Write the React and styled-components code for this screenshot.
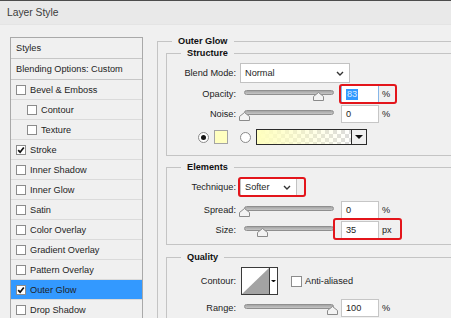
import React from 'react';
import styled, { createGlobalStyle, css } from 'styled-components';

// left list of effects
const styleItems = [
  { label: 'Styles', header: true },
  { label: 'Blending Options: Custom', header: true },
  { label: 'Bevel & Emboss', box: true },
  { label: 'Contour', box: true, sub: true },
  { label: 'Texture', box: true, sub: true },
  { label: 'Stroke', box: true, checked: true },
  { label: 'Inner Shadow', box: true },
  { label: 'Inner Glow', box: true },
  { label: 'Satin', box: true },
  { label: 'Color Overlay', box: true },
  { label: 'Gradient Overlay', box: true },
  { label: 'Pattern Overlay', box: true },
  { label: 'Outer Glow', box: true, checked: true, active: true },
  { label: 'Drop Shadow', box: true },
];

const GlobalStyle = createGlobalStyle`
  html, body {
    margin: 0;
    padding: 0;
    background: #f0f0f0;
  }
  body {
    font-family: "Liberation Sans", Arial, sans-serif;
    font-size: 9.2px;
    color: #1e1e1e;
  }
`;

const Window = styled.div`
  width: 451px;
  height: 318px;
  overflow: hidden;
  display: flex;
  flex-direction: column;
  background: #f0f0f0;
`;

const TitleBar = styled.div`
  height: 23px;
  flex-shrink: 0;
  border-top: 1px solid #4d4d4d;
  border-bottom: 1px solid #e4e4e4;
  background: #e9e9e9;
  display: flex;
  align-items: center;
  padding-left: 7px;
  font-size: 10.3px;
  color: #3c3c3c;
`;

const Body = styled.div`
  display: flex;
  align-items: flex-start;
  gap: 14px;
  padding: 10px 0 0 10px;
`;

const StyleList = styled.div`
  margin-top: 2px;
  width: 133px;
  flex-shrink: 0;
  box-sizing: border-box;
  border: 1px solid #a9a9a9;
`;

const StyleRow = styled.div`
  height: ${p => (p.$header ? 21 : 20)}px;
  box-sizing: border-box;
  display: flex;
  align-items: center;
  gap: 4px;
  padding-left: ${p => (p.$sub ? 16 : 5)}px;
  border-bottom: 1px solid ${p => (p.$header ? '#c6c6c6' : '#dadada')};
  background: ${p => (p.$active ? '#3399ff' : 'transparent')};
  white-space: nowrap;
`;

const Box = styled.span`
  width: ${p => p.$size || 10}px;
  height: ${p => p.$size || 10}px;
  box-sizing: border-box;
  margin-left: ${p => p.$ml || 0}px;
  border: 1px solid #8c8c8c;
  background: #fff;
  display: inline-flex;
  align-items: center;
  justify-content: center;
  flex-shrink: 0;
`;

const Column = styled.div`
  flex-shrink: 0;
`;

const Group = styled.fieldset`
  margin: ${p => p.$mt || 0}px 0 0 0;
  padding: ${p => p.$pt || 0}px 0 ${p => p.$pb || 0}px 8px;
  border: 1px solid #c4c4c4;
  width: ${p => p.$w}px;
  box-sizing: border-box;
  min-width: 0;
`;

const Legend = styled.legend`
  margin-left: 6px;
  padding: 0 6px;
  height: 12px;
  line-height: 12px;
  font-weight: bold;
  color: #111;
`;

const Row = styled.div`
  height: ${p => p.$h || 20}px;
  margin-top: ${p => p.$mt || 0}px;
  display: flex;
  align-items: center;
  padding-left: ${p => p.$pl || 0}px;
`;

const Label = styled.span`
  width: 61px;
  text-align: right;
  flex-shrink: 0;
  color: #222;
`;

const Select = styled.div`
  width: ${p => p.$w}px;
  height: 20px;
  box-sizing: border-box;
  margin-left: ${p => p.$ml ?? 4}px;
  border: 1px solid #c2c2c2;
  background: #fff;
  display: flex;
  align-items: center;
  justify-content: space-between;
  padding: 0 5px 0 4px;
`;

const SliderBox = styled.div`
  position: relative;
  width: 90px;
  height: 12px;
  margin-left: 8px;
  flex-shrink: 0;
`;

const Track = styled.div`
  margin-top: 2px;
  height: 5px;
  box-sizing: border-box;
  border: 1px solid #8f8f8f;
  border-radius: 3px;
  background: linear-gradient(#a4a4a4, #c6c6c6);
`;

const Thumb = styled.svg`
  position: absolute;
  top: 4px;
`;

const Field = styled.div`
  width: 38px;
  height: 18px;
  box-sizing: border-box;
  border: 1px solid ${p => (p.$focus ? '#86b6e8' : '#c6c6c6')};
  background: #fff;
  display: flex;
  align-items: center;
  padding-left: 4px;
  flex-shrink: 0;
`;

const Selected = styled.span`
  background: #3399ff;
  color: #dceaff;
  padding: 0 1px;
  line-height: 11px;
`;

const Unit = styled.span`
  margin-left: 3px;
  color: #222;
`;

// red annotation frame drawn over a control
const Marked = styled.div`
  position: relative;
  display: flex;
  align-items: center;
  margin-left: ${p => p.$ml || 0}px;

  ${p =>
    p.$w &&
    css`
      &::after {
        content: '';
        position: absolute;
        left: ${p.$l}px;
        top: ${p.$t}px;
        width: ${p.$w}px;
        height: ${p.$h}px;
        box-sizing: border-box;
        border: 2px solid #e3151b;
        border-radius: 3px;
      }
    `}
`;

const Radio = styled.span`
  width: 11px;
  height: 11px;
  box-sizing: border-box;
  border-radius: 50%;
  border: 1px solid #8a8a8a;
  background: #fff;
  margin-left: ${p => p.$ml || 0}px;
  display: inline-flex;
  align-items: center;
  justify-content: center;
  flex-shrink: 0;

  &::before {
    content: '';
    width: 5px;
    height: 5px;
    border-radius: 50%;
    background: ${p => (p.$on ? '#151515' : 'transparent')};
  }
`;

const Swatch = styled.span`
  width: 14px;
  height: 14px;
  box-sizing: border-box;
  margin-left: 5px;
  border: 1px solid #a4a4a4;
  background: #ffffc0;
  flex-shrink: 0;
`;

const GradientPicker = styled.div`
  width: 111px;
  height: 16px;
  box-sizing: border-box;
  margin-left: 5px;
  border: 1px solid #2b2b2b;
  display: flex;
  flex-shrink: 0;
`;

const GradientFill = styled.div`
  flex: 1;
  background:
    linear-gradient(to right, #ffffbe, rgba(255, 255, 190, 0)),
    repeating-conic-gradient(#dcdcdc 0 25%, #ffffff 0 50%) 0 0 / 8px 8px;
`;

const DropPart = styled.div`
  width: 14px;
  border-left: 1px solid #2b2b2b;
  background: #f0f0f0;
  display: flex;
  align-items: center;
  justify-content: center;
`;

const ContourPicker = styled.div`
  width: 37px;
  height: 28px;
  box-sizing: border-box;
  margin-left: 5px;
  border: 1px solid #3a3a3a;
  display: flex;
  flex-shrink: 0;
`;

const ContourArrow = styled.div`
  flex: 1;
  border-left: 1px solid #3a3a3a;
  background: #fff;
  display: flex;
  align-items: center;
  justify-content: center;
`;

const CheckText = styled.span`
  margin-left: 3px;
  color: #222;
`;

const Check = () => (
  <svg width="8" height="8" viewBox="0 0 8 8">
    <path d="M1.2 4.2 L3.1 6.2 L6.8 1.4" fill="none" stroke="#111" strokeWidth="1.7" />
  </svg>
);

const Chevron = () => (
  <svg width="8" height="5" viewBox="0 0 8 5">
    <path d="M1 1 L4 4 L7 1" fill="none" stroke="#333" strokeWidth="1.4" />
  </svg>
);

const DownTriangle = ({ w = 8 }) => (
  <svg width={w} height={w / 2} viewBox="0 0 8 4">
    <path d="M0 0 H8 L4 4 Z" fill="#111" />
  </svg>
);

const Slider = ({ pct }) => (
  <SliderBox>
    <Track />
    <Thumb width="11" height="9" viewBox="0 0 11 9" style={{ left: pct * 90 - 5.5 }}>
      <polygon points="0.5,8.5 0.5,4.5 5.5,0.5 10.5,4.5 10.5,8.5" fill="#f3f3f3" stroke="#8a8a8a" />
    </Thumb>
  </SliderBox>
);

const Value = ({ children, unit = '%', focus }) => (
  <>
    <Field $focus={focus}>{children}</Field>
    <Unit>{unit}</Unit>
  </>
);

const App = () => (
  <Window>
    <GlobalStyle />
    <TitleBar>Layer Style</TitleBar>
    <Body>
      <StyleList>
        {styleItems.map(item => (
          <StyleRow key={item.label} $header={item.header} $sub={item.sub} $active={item.active}>
            {item.box && <Box>{item.checked && <Check />}</Box>}
            <span>{item.label}</span>
          </StyleRow>
        ))}
      </StyleList>

      <Column>
        <Group $w={320}>
          <Legend>Outer Glow</Legend>

          <Group $w={300} $pt={4} $pb={8}>
            <Legend>Structure</Legend>
            <Row>
              <Label>Blend Mode:</Label>
              <Select $w={110}>
                <span>Normal</span>
                <Chevron />
              </Select>
            </Row>
            <Row $mt={1}>
              <Label>Opacity:</Label>
              <Slider pct={0.83} />
              <Marked $ml={7} $l={-2} $t={-1} $w={58} $h={20}>
                <Value focus>
                  <Selected>83</Selected>
                </Value>
              </Marked>
            </Row>
            <Row>
              <Label>Noise:</Label>
              <Slider pct={0} />
              <Marked $ml={7}>
                <Value>0</Value>
              </Marked>
            </Row>
            <Row $mt={3} $pl={23}>
              <Radio $on />
              <Swatch />
              <Radio $ml={12} />
              <GradientPicker>
                <GradientFill />
                <DropPart>
                  <DownTriangle />
                </DropPart>
              </GradientPicker>
            </Row>
          </Group>

          <Group $w={300} $mt={5} $pt={4} $pb={4}>
            <Legend>Elements</Legend>
            <Row>
              <Label>Technique:</Label>
              <Marked $ml={4} $l={-2} $t={0} $w={68} $h={20}>
                <Select $w={57} $ml={0}>
                  <span>Softer</span>
                  <Chevron />
                </Select>
              </Marked>
            </Row>
            <Row $mt={3}>
              <Label>Spread:</Label>
              <Slider pct={0} />
              <Marked $ml={7}>
                <Value>0</Value>
              </Marked>
            </Row>
            <Row>
              <Label>Size:</Label>
              <Slider pct={0.2} />
              <Marked $ml={7} $l={-8} $t={-3} $w={69} $h={22}>
                <Value unit="px">35</Value>
              </Marked>
            </Row>
          </Group>

          <Group $w={300} $mt={6} $pt={4} $pb={10}>
            <Legend>Quality</Legend>
            <Row $h={28}>
              <Label>Contour:</Label>
              <ContourPicker>
                <svg width="27" height="26" viewBox="0 0 27 26">
                  <rect width="27" height="26" fill="#fff" />
                  <polygon points="0,26 27,0 27,26" fill="#a3a3a3" />
                </svg>
                <ContourArrow>
                  <DownTriangle w={5} />
                </ContourArrow>
              </ContourPicker>
              <Box $size={11} $ml={13} />
              <CheckText>Anti-aliased</CheckText>
            </Row>
            <Row $mt={3}>
              <Label>Range:</Label>
              <Slider pct={0.98} />
              <Marked $ml={7}>
                <Value>100</Value>
              </Marked>
            </Row>
          </Group>
        </Group>
      </Column>
    </Body>
  </Window>
);

export default App;
